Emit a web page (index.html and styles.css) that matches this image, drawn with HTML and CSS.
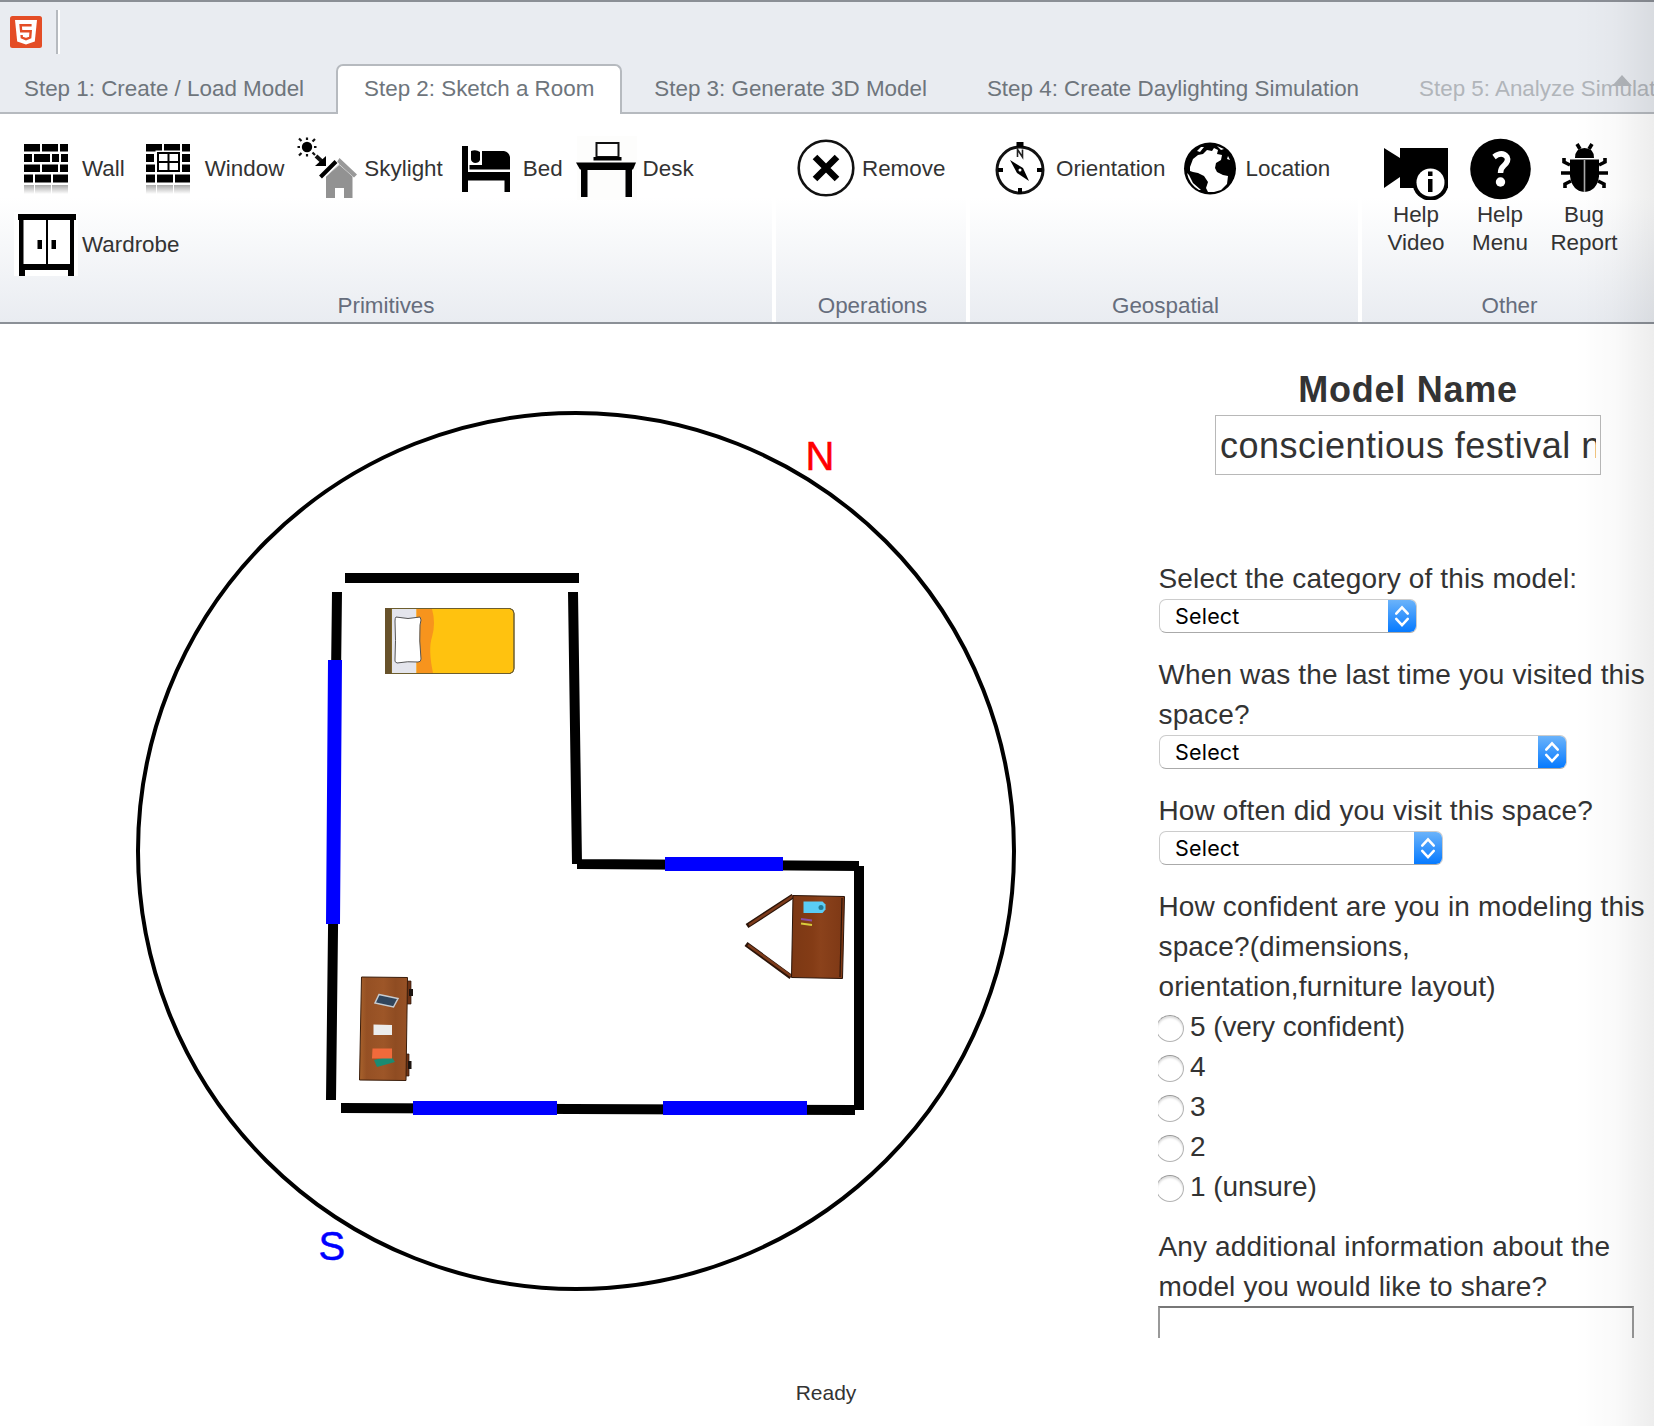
FILE: index.html
```html
<!DOCTYPE html>
<html lang="en">
<head>
<meta charset="utf-8">
<title>Sketch a Room</title>
<link rel="stylesheet" href="styles.css">
</head>
<body>
<header class="titlebar">
  <svg class="logo" viewBox="0 0 32 32"><rect width="32" height="32" rx="2.5" fill="#e44d26"/><path d="M5 4h22l-2.200 21.500L16 28.500l-8.800-3z" fill="#fff"/><path d="M21.600 9.300h-11l.6 6h9.500l-.5 6.200-4.200 1.600-4.200-1.600-.2-2.500" fill="none" stroke="#e44d26" stroke-width="2.400"/></svg>
  <span class="rule"></span>
</header>
<nav class="tabs">
  <a class="tab">Step 1: Create / Load Model</a>
  <a class="tab active">Step 2: Sketch a Room</a>
  <a class="tab">Step 3: Generate 3D Model</a>
  <a class="tab">Step 4: Create Daylighting Simulation</a>
  <a class="tab disabled">Step 5: Analyze Simulation</a>
  <span class="collapse"></span>
</nav>
<section class="ribbon">
  <div class="group primitives">
    <div class="tools">
      <button class="tool"><svg viewBox="0 0 64 64">
        <defs>
          <linearGradient id="fade" x1="0" y1="0" x2="0" y2="1"><stop offset="0" stop-color="#aaa"/><stop offset="1" stop-color="#fff"/></linearGradient>
          <g id="reflection" fill="url(#fade)"><rect x="10" y="49" width="10" height="9"/><rect x="21" y="49" width="16" height="9"/><rect x="38" y="49" width="16" height="9"/></g>
        </defs>
        <path d="M10 8h16v7.500H10zM28 8h16v7.500H28zM46 8h8v7.500h-8zM10 18h8v8h-8zM20 18h16v8H20zM38 18h7v8h-7zM47 18h7v8h-7zM10 28.500h16v7.500H10zM28 28.500h16v7.500H28zM46 28.500h8v7.500h-8zM10 38.500h9v8h-9zM21 38.500h16v8H21zM39 38.500h15v8H39z"/><use href="#reflection"/></svg><span>Wall</span></button>
      <button class="tool window"><svg viewBox="0 0 64 64"><path d="M10 8h16v7.500H10zM28 8h16v7.500H28zM46 8h8v7.500h-8zM10 18h8v8h-8zM46 18h8v8h-8zM10 28.500h9v7.500h-9zM46 28.500h8v7.500h-8zM10 38.500h9v8h-9zM21 38.500h16v8H21zM39 38.500h15v8H39z"/><path fill="#fff" stroke="#fff" stroke-width="5" d="M22 17h21v18H22z"/><path fill="#fff" stroke="#000" stroke-width="2" d="M22 17h21v18H22zM32.500 17v18M22 26h21"/><use href="#reflection"/></svg><span>Window</span></button>
      <button class="tool"><svg viewBox="0 0 64 64"><circle cx="11" cy="11" r="5.200"/><g stroke="#111" stroke-width="2.200"><path d="M11 1.500V4M11 18v2.500M1.500 11H4M18 11h2.500M3 2.500L5.500 5M16.500 16.500L19 19M3 19.500L5.500 17M16.500 5.500L19 3"/><path stroke-width="4" d="M20 20l6 5.500"/></g><path d="M30 20v10H19z"/><path d="M43.500 22L61 38.500l-3 3-14.500-13-11 10.500z" fill="#999"/><path d="M30 62V40.500L43.500 29 56.500 40.500V62H48V52h-9v10z" fill="#929292"/><path d="M24 41.500L41 25.500" stroke="#fff" stroke-width="7"/><path d="M24.500 41L40 25.500" stroke="#000" stroke-width="4"/></svg><span>Skylight</span></button>
      <button class="tool"><svg viewBox="0 0 64 64"><path d="M7 10h6v26H55v20h-5.500V44.500H13V56H7zM16 15q5-2 9 1v8q-1 3-5 3-4-1-4-4v-5zM27 15h22q5 1 6 6v12.500H14.500V29H27z"/></svg><span>Bed</span></button>
      <button class="tool"><svg viewBox="0 0 64 64"><path fill="#fdfdfc" d="M2 0h60v64H2z"/><path fill="#fff" stroke="#111" stroke-width="2" d="M21.500 7h22v14h-22z"/><path d="M18.500 21h28v3.500h-28zM1 26.500h60l-3 7h-1V61h-6.500V34h-38v27H6V33.500H5z"/></svg><span>Desk</span></button>
      <button class="tool"><svg viewBox="0 0 64 64"><path fill="#fff" d="M0 0h64v64H0z"/><path d="M4 2h58v6h-2v56h-6v-6H11v6H5V8H4z"/><path fill="#fff" d="M9.500 8H32v44H9.500zM34 8H56v44H34z"/><path d="M23.500 28H28v9h-4.500zM37.500 28H42v9h-4.500z"/></svg><span>Wardrobe</span></button>
    </div>
    <div class="caption">Primitives</div>
  </div>
  <div class="group operations">
    <div class="tools">
      <button class="tool"><svg viewBox="0 0 64 64"><circle cx="32" cy="32" r="27.300" fill="#fff" stroke="#111" stroke-width="2.600"/><path d="M21 21l22 22M43 21L21 43" stroke="#000" stroke-width="6.500"/></svg><span>Remove</span></button>
    </div>
    <div class="caption">Operations</div>
  </div>
  <div class="group geospatial">
    <div class="tools">
      <button class="tool"><svg viewBox="0 0 64 64"><circle cx="32" cy="34" r="23" fill="#fff" stroke="#111" stroke-width="3"/><path d="M28.500 6h7v5h-7zM30 52h4v6h-4zM10 32h5v4h-5zM49 32h5v4h-5zM22 24l13 8 6 13-12-8z"/><path d="M29.500 21v-7.500l5 7.500v-7.500" fill="none" stroke="#222" stroke-width="1.600"/><circle cx="32" cy="34" r="1.500" fill="#fff"/></svg><span>Orientation</span></button>
      <button class="tool"><svg viewBox="0 0 64 64"><circle cx="32" cy="32.500" r="26"/><path fill="#fff" d="M12 31l3-8 5-4 5-1 4-4 5 1 2-3 4 2-1 4 5 1-1 5-5 3-1 5 2 4 6 3 5 1-1 8-6 6-7 2-6 0-2-4 2-6-4-6-6-3-5-1-3-1z"/><path fill="#fff" d="M9 37q2 11 12 17l2 0-8-7-4-8zM19 15l4-4 3 0-4 5zM50 20l2 4-3-1zM39 10l7 3-3 1z"/></svg><span>Location</span></button>
    </div>
    <div class="caption">Geospatial</div>
  </div>
  <div class="group other">
    <div class="tools">
      <button class="tool stacked"><svg viewBox="0 0 64 64"><path d="M0 12l16 10V12h48v40H16V41L0 52z"/><circle cx="46.500" cy="46.500" r="18"/><circle cx="46.500" cy="46.500" r="14" fill="#fff"/><path d="M44 35.500h4.500V40H44zM44 43h4.500v13H44z"/></svg><span>Help<br>Video</span></button>
      <button class="tool stacked"><svg viewBox="0 0 64 64"><circle cx="32.500" cy="33" r="30.300"/><path d="M26 21q8-6 13 0 2 4-3 8.500-3.500 3-3.500 7.500" fill="none" stroke="#fff" stroke-width="5.500"/><circle cx="32.500" cy="46" r="4.700" fill="#fff"/></svg><span>Help<br>Menu</span></button>
      <button class="tool stacked"><svg viewBox="0 0 64 64"><path d="M23 22q0-10 9.500-10T42 22zM18 23.500h29v17Q45 55 32.500 56 20 55 18 40z"/><path d="M28 13l-3-5M37 13l3-5M18 29l-6-3v-4M47 29l6-3v-4M18 37H9M47 37h9M19 45l-6 3v4M46 45l6 3v4" fill="none" stroke="#000" stroke-width="3.600"/><path d="M32.500 24v32" stroke="#aaa" stroke-width="1.600"/></svg><span>Bug<br>Report</span></button>
    </div>
    <div class="caption">Other</div>
  </div>
</section>
<main class="workspace">
  <svg class="plan" viewBox="0 324 1150 1014">
    <defs>
      <linearGradient id="oak"><stop offset="0" stop-color="#a8622c"/><stop offset=".15" stop-color="#955024"/><stop offset=".5" stop-color="#9d5628"/><stop offset=".75" stop-color="#8f4c22"/><stop offset="1" stop-color="#985226"/></linearGradient>
      <linearGradient id="cherry"><stop offset="0" stop-color="#7c3814"/><stop offset=".4" stop-color="#843c16"/><stop offset=".55" stop-color="#8b421b"/><stop offset="1" stop-color="#7d3815"/></linearGradient>
    </defs>
    <circle cx="576" cy="851" r="438" fill="none" stroke="#000" stroke-width="4"/>
    <text x="805.500" y="470" fill="#f00" stroke="#f00">N</text>
    <text x="318.500" y="1260" fill="#00f" stroke="#00f">S</text>
    <path d="M345 573h234v10H345zM332 592h10l-6 508h-10zM568 592h10l4 272h-10zM577 859l282 2v10l-282-2zM854 866h10v244h-10zM341 1103l514 2v10l-514-2z"/>
    <path fill="#00f" d="M328 660h14l-2 264h-14zM665 857h118v14H665zM413 1101h144v14H413zM663 1101h144v14H663z"/>
    <g class="bed">
      <path d="M391 608.500h119q4 1 4 5v55q0 4-4 5H391z" fill="#ffc20f" stroke="#6d5e2e"/>
      <path d="M392 609h24.500v64H392z" fill="#e4e5ec"/>
      <path d="M416.500 609h15.500q4 14 0 28-4 12 1 36h-16.500z" fill="#f7941d"/>
      <path d="M391 608.500h119q4 1 4 5v55q0 4-4 5H391z" fill="none" stroke="#6d5e2e"/>
      <path d="M385 608h6.500v66H385z" fill="#67522b"/>
      <path d="M396 617q12 3 24 0 2 2 0 8-1 15 1 34 0 3-3 3-10-1-21 1-3-1-2-4 1-18 0-38 0-3 1-4z" fill="#fff" stroke="#555"/>
    </g>
    <g class="desk">
      <path d="M407 981h4v23h-4zM405 1054h4v22h-4z" fill="#6d3316" stroke="#2b1408" stroke-width=".7"/>
      <path d="M409 989h4v7h-4zM408 1061h3.500v8H408z" fill="#1c1410"/>
      <path d="M361.500 977l46 .5-1.500 103-46.500-.5z" fill="url(#oak)" stroke="#3a1d0b"/>
      <path d="M379 994.500l19 4-4.500 8.500-18.500-4z" fill="#30455c" stroke="#c7ccd1" stroke-width="1.500"/>
      <path d="M373.500 1024.500l18.500.5v10h-18.500z" fill="#ececec"/>
      <path d="M374 1060l17-4 4 6-18 5z" fill="#1b8b72"/>
      <path d="M372.500 1048.500h19.500v10h-20z" fill="#f16a3b"/>
    </g>
    <g class="wardrobe">
      <path d="M747 926l46-30M746 944l45 33" stroke="#2b1408" stroke-width="5"/>
      <path d="M749 925l44-29M748 945l43 31" stroke="#7c3b1b" stroke-width="2.500"/>
      <path d="M793 895.500l51.500 1-2 82-51-1z" fill="url(#cherry)" stroke="#2b1408"/>
      <path d="M842 898l-2 79" stroke="#2b1408" stroke-width="1.200"/>
      <path d="M803.500 901.500h19l3 3v5l-3 3.500h-19z" fill="#5acdf5"/><circle cx="821" cy="907.500" r="2.500" fill="#247b94"/>
      <path d="M801 919l11 1.500" stroke="#8a4fa5" stroke-width="2"/><path d="M801 923.500l11 1.500" stroke="#d8cc3c" stroke-width="2"/>
    </g>
  </svg>
  <aside class="survey">
    <h1>Model Name</h1>
    <div class="name">conscientious festival n</div>
    <section class="question">
      <p>Select the category of this model:</p>
      <div class="select category"><span>Select</span><i><svg viewBox="0 0 29 33"><path d="M8.500 14l6-6.500 6 6.500M8.500 19.500l6 6.500 6-6.500"/></svg></i></div>
    </section>
    <section class="question">
      <p>When was the last time you visited this space?</p>
      <div class="select visited"><span>Select</span><i><svg viewBox="0 0 29 33"><path d="M8.500 14l6-6.500 6 6.500M8.500 19.500l6 6.500 6-6.500"/></svg></i></div>
    </section>
    <section class="question">
      <p>How often did you visit this space?</p>
      <div class="select often"><span>Select</span><i><svg viewBox="0 0 29 33"><path d="M8.500 14l6-6.500 6 6.500M8.500 19.500l6 6.500 6-6.500"/></svg></i></div>
    </section>
    <section class="question">
      <p>How confident are you in modeling this space?(dimensions,<br>orientation,furniture layout)</p>
      <div class="ratings">
        <label><span class="radio"></span>5 (very confident)</label>
        <label><span class="radio"></span>4</label>
        <label><span class="radio"></span>3</label>
        <label><span class="radio"></span>2</label>
        <label><span class="radio"></span>1 (unsure)</label>
      </div>
    </section>
    <section class="question">
      <p>Any additional information about the model you would like to share?</p>
      <div class="comments"></div>
    </section>
  </aside>
</main>
<footer class="status">Ready</footer>
<div class="edge-shade"></div>
</body>
</html>
```
FILE: styles.css
```css
* { box-sizing: border-box; }
body {
  margin: 0;
  width: 1654px;
  height: 1426px;
  overflow: hidden;
  position: relative;
  background: #fff;
  color: #333;
  font-family: "Liberation Sans", Arial, sans-serif;
  font-size: 22.4px;
}
.titlebar {
  height: 64px;
  padding: 8px 10px 0;
  display: flex;
  align-items: flex-start;
  gap: 14px;
  background: #e9ecf1;
  border-top: 2px solid #8b8f96;
}
.logo { width: 32px; height: 32px; margin-top: 6px; }
.rule { width: 4px; height: 44px; background: #fff; border-left: 2px solid #b6babf; }
.tabs {
  position: relative;
  height: 50px;
  display: flex;
  gap: 4px;
  overflow: hidden;
  white-space: nowrap;
  background: linear-gradient(#b6babf, #b6babf) 0 100% / 100% 2px no-repeat #e9ecf1;
}
.tab {
  flex: none;
  padding: 0 26px;
  border: 2px solid transparent;
  border-bottom: 0;
  line-height: 45px;
  color: #6e757c;
}
.tab:first-child { margin-left: -4px; }
.tab.active { background: #fff; border-color: #b6babf; border-radius: 7px 7px 0 0; }
.tab.disabled { color: #b1b5ba; }
.collapse {
  position: absolute;
  left: 1612px;
  top: 11px;
  border: 10px solid transparent;
  border-top: 0;
  border-bottom: 11px solid #b1b5ba;
}
.ribbon {
  height: 210px;
  display: flex;
  border-bottom: 2px solid #8b9097;
  background: linear-gradient(#fff 40%, #e9ecf1);
}
.group { display: flex; flex-direction: column; justify-content: space-between; }
.group + .group { border-left: 4px solid #fff; }
.primitives { width: 772px; }
.operations { width: 194px; }
.geospatial { width: 392px; }
.other { width: 296px; }
.tools { display: flex; flex-wrap: wrap; gap: 12px; padding: 22px 0 0 14px; }
.operations .tools, .geospatial .tools { padding-left: 18px; }
.other .tools { padding-left: 22px; gap: 20px; }
.tool {
  display: flex;
  align-items: center;
  gap: 4px;
  padding: 0;
  border: 0;
  background: none;
  color: #333;
  font: inherit;
}
.tool svg { width: 64px; height: 64px; flex: none; }
.tool span { padding-top: 2px; }
.tool.window svg { margin: 0 1px 0 -1px; }
.tool.stacked { flex-direction: column; gap: 0; width: 64px; line-height: 28px; }
.tool.stacked span { padding-top: 1px; }
.caption { height: 34px; line-height: 34px; padding-top: 1px; text-align: center; color: #666d7c; }
.group + .group .caption { padding-left: 3px; }
.workspace { height: 1014px; display: flex; overflow: hidden; }
.plan { width: 1150px; height: 1014px; flex: none; font-size: 40px; }
.plan text { stroke-width: .5px; }
.survey { width: 504px; padding: 44px 0 0 8px; font-size: 28px; line-height: 40px; letter-spacing: .14px; overflow: hidden; }
h1 { margin: 0; padding-left: 4px; text-align: center; font-size: 36px; line-height: 44px; letter-spacing: .75px; }
.name {
  width: 386px;
  height: 60px;
  margin: 3px 0 84px 57px;
  border: 1px solid #b8b8b8;
  padding: 0 4px;
  line-height: 60px;
  font-size: 36px;
  letter-spacing: .48px;
  white-space: nowrap;
  overflow: clip;
  overflow-clip-margin: content-box;
}
.question { margin: 0 0 22px; }
.question p { margin: 0 0 0 .5px; }
.select {
  height: 34px;
  margin-left: 1px;
  display: flex;
  justify-content: space-between;
  border: 1px solid #ccc;
  border-bottom-color: #aaa;
  border-radius: 7px;
  padding-left: 15px;
  color: #000;
  font-family: Inter, sans-serif;
  font-size: 21.5px;
  line-height: 33px;
  letter-spacing: .2px;
  overflow: hidden;
}
.select i { width: 28px; background: linear-gradient(#6bb3fa, #067aff); }
.select svg { display: block; width: 28px; height: 32px; fill: none; stroke: #fff; stroke-width: 2.6px; stroke-linecap: round; }
.category { width: 258px; }
.visited { width: 408px; }
.often { width: 284px; }
.ratings { overflow: hidden; }
label { display: flex; align-items: center; gap: 6px; height: 40px; letter-spacing: -.08px; }
.radio {
  flex: none;
  width: 28px;
  height: 27px;
  margin: 2px 0 0 -2px;
  border: 1px solid #b4b4b4;
  border-top-color: #999;
  border-radius: 50%;
  box-shadow: inset 0 2px 2px #ddd;
}
.question:last-child { margin-top: -2px; }
.comments { width: 476px; height: 80px; margin-top: -1px; border: 2px solid #999; border-top-color: #777; }
.status { padding-top: 42px; padding-right: 2px; text-align: center; line-height: 26px; font-size: 21px; }
.edge-shade {
  position: absolute;
  inset: 0 0 0 auto;
  width: 80px;
  background: linear-gradient(90deg, transparent, rgba(0,0,0,.018) 50%, rgba(0,0,0,.07));
  pointer-events: none;
}
```
